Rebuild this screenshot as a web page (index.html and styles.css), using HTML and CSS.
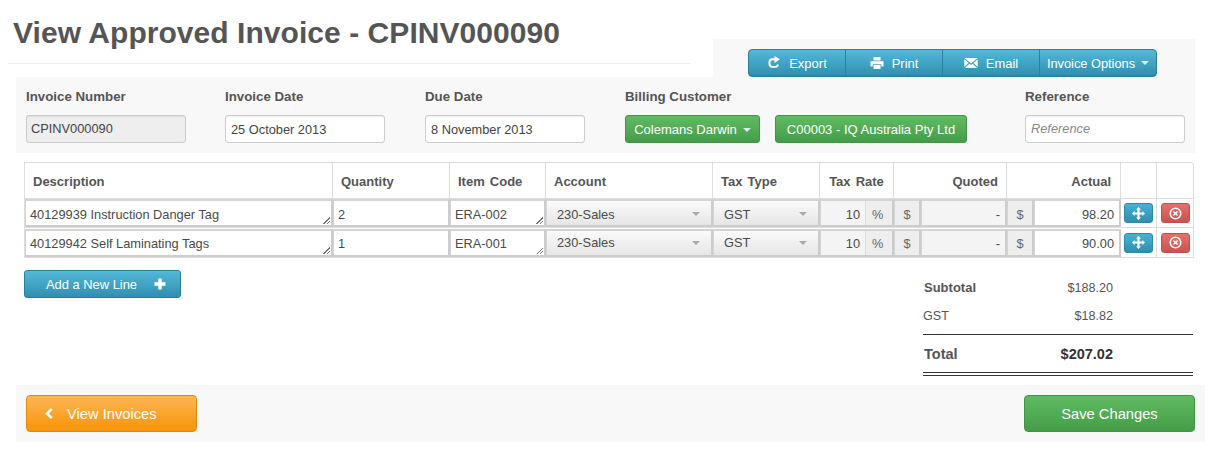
FILE: index.html
```html
<!DOCTYPE html>
<html lang="en">
<head>
<meta charset="utf-8">
<title>View Approved Invoice</title>
<link rel="stylesheet" href="styles.css">
</head>
<body>
<svg class="defs" width="0" height="0" aria-hidden="true">
  <symbol id="i-export" viewBox="0 0 14 14"><path d="M7.500 2.200H5.500A4 4 0 0 0 1.500 6.200v1.600a4 4 0 0 0 4 4h2.700a3.600 3.600 0 0 0 3.600-3.400h-2a1.800 1.800 0 0 1-1.800 1.500H5.700a2.200 2.200 0 0 1-2.200-2.200V6.400a2.200 2.200 0 0 1 2.200-2.200h1.800V7l5.500-3.800L7.500 0z" fill="currentColor"/></symbol>
  <symbol id="i-print" viewBox="0 0 14 14"><path d="M3.500 1h7v3.500h-7zM0.500 5.200h13v5.300h-2.200V8.200H2.700v2.300H0.500zM3.500 9h7v4h-7z" fill="currentColor"/></symbol>
  <symbol id="i-mail" viewBox="0 0 14 12"><path d="M0.500 1h13L7 6.600zM0.300 2.300l4.200 3.600-4.200 4.100zM13.700 2.300v7.700L9.500 5.900zM5.400 6.700 7 8l1.600-1.300 4.500 4.300H0.900z" fill="currentColor"/></symbol>
  <symbol id="i-plus" viewBox="0 0 12 12"><path d="M4.300 0.500h3.400v3.800h3.800v3.400H7.700v3.800H4.300V7.700H0.500V4.300h3.800z" fill="currentColor"/></symbol>
  <symbol id="i-left" viewBox="0 0 10 14"><path d="M7 1l2 2-4 4 4 4-2 2-6-6z" fill="currentColor"/></symbol>
  <symbol id="i-move" viewBox="0 0 14 14"><path d="M7 0l2.600 2.800H8.200v3h3V4.400L14 7l-2.800 2.600V8.200h-3v3h1.400L7 14l-2.600-2.800h1.400v-3h-3v1.400L0 7l2.800-2.600v1.400h3v-3H4.400z" fill="currentColor"/></symbol>
  <symbol id="i-remove" viewBox="0 0 14 14"><path fill-rule="evenodd" d="M7 0.500a6.500 6.500 0 1 1 0 13a6.500 6.500 0 0 1 0-13zM7 2.200a4.800 4.800 0 1 0 0 9.600a4.800 4.800 0 0 0 0-9.600zM5.300 4.200L7 5.900l1.700-1.700 1.100 1.100L8.100 7l1.700 1.700-1.100 1.100L7 8.100 5.300 9.800 4.200 8.700 5.900 7 4.200 5.300z" fill="currentColor"/></symbol>
</svg>

<header class="top">
  <div class="heading"><h1>View Approved Invoice - CPINV000090</h1></div>
  <div class="toolbar">
    <div class="btn-group">
      <a class="tool tool-export"><svg class="ico"><use href="#i-export"/></svg>Export</a>
      <a class="tool tool-print"><svg class="ico"><use href="#i-print"/></svg>Print</a>
      <a class="tool tool-email"><svg class="ico"><use href="#i-mail"/></svg>Email</a>
      <a class="tool tool-options">Invoice Options<span class="caret caret-light"></span></a>
    </div>
  </div>
</header>

<section class="details">
  <div class="field field-first">
    <label>Invoice Number</label>
    <div class="input readonly">CPINV000090</div>
  </div>
  <div class="field">
    <label>Invoice Date</label>
    <div class="input lowered">25 October 2013</div>
  </div>
  <div class="field">
    <label>Due Date</label>
    <div class="input lowered">8 November 2013</div>
  </div>
  <div class="field field-wide">
    <label>Billing Customer</label>
    <div class="customer">
      <a class="btn-green btn-branch">Colemans Darwin<span class="caret caret-light"></span></a>
      <a class="btn-green btn-code">C00003 - IQ Australia Pty Ltd</a>
    </div>
  </div>
  <div class="field">
    <label>Reference</label>
    <div class="input placeholder">Reference</div>
  </div>
</section>

<table class="lines">
  <colgroup>
    <col class="c-desc"><col class="c-qty"><col class="c-code"><col class="c-acc"><col class="c-type"><col class="c-rate"><col class="c-quoted-sign"><col class="c-quoted"><col class="c-actual-sign"><col class="c-actual"><col class="c-move"><col class="c-del">
  </colgroup>
  <thead>
    <tr>
      <th>Description</th><th>Quantity</th><th>Item Code</th><th>Account</th><th>Tax Type</th><th class="center">Tax Rate</th>
      <th class="right quoted" colspan="2">Quoted</th><th class="right" colspan="2">Actual</th><th></th><th></th>
    </tr>
  </thead>
  <tbody>
    <tr>
      <td class="cell"><div class="box grip">40129939 Instruction Danger Tag</div></td>
      <td class="cell"><div class="box">2</div></td>
      <td class="cell"><div class="box grip">ERA-002</div></td>
      <td class="cell"><div class="select acc">230-Sales<span class="caret"></span></div></td>
      <td class="cell"><div class="select">GST<span class="caret"></span></div></td>
      <td class="cell"><div class="rate"><span class="rate-val">10</span><span class="rate-unit">%</span></div></td>
      <td class="cell"><div class="addon">$</div></td>
      <td class="cell"><div class="box dis">-</div></td>
      <td class="cell"><div class="addon">$</div></td>
      <td class="cell"><div class="box num">98.20</div></td>
      <td class="act"><a class="mini mini-blue"><svg class="ico-mini"><use href="#i-move"/></svg></a></td>
      <td class="act"><a class="mini mini-red"><svg class="ico-mini"><use href="#i-remove"/></svg></a></td>
    </tr>
    <tr class="row-two">
      <td class="cell"><div class="box grip">40129942 Self Laminating Tags</div></td>
      <td class="cell"><div class="box">1</div></td>
      <td class="cell"><div class="box grip">ERA-001</div></td>
      <td class="cell"><div class="select acc">230-Sales<span class="caret"></span></div></td>
      <td class="cell"><div class="select">GST<span class="caret"></span></div></td>
      <td class="cell"><div class="rate"><span class="rate-val">10</span><span class="rate-unit">%</span></div></td>
      <td class="cell"><div class="addon">$</div></td>
      <td class="cell"><div class="box dis">-</div></td>
      <td class="cell"><div class="addon">$</div></td>
      <td class="cell"><div class="box num">90.00</div></td>
      <td class="act"><a class="mini mini-blue"><svg class="ico-mini"><use href="#i-move"/></svg></a></td>
      <td class="act"><a class="mini mini-red"><svg class="ico-mini"><use href="#i-remove"/></svg></a></td>
    </tr>
  </tbody>
</table>

<section class="under">
  <a class="btn-add">Add a New Line<svg class="ico-plus"><use href="#i-plus"/></svg></a>
  <div class="totals">
    <div class="t-row t-sub"><b>Subtotal</b><span>$188.20</span></div>
    <div class="t-row t-gst"><span>GST</span><span>$18.82</span></div>
    <div class="t-row t-total"><b>Total</b><b>$207.02</b></div>
  </div>
</section>

<footer class="actions">
  <a class="btn-orange"><svg class="ico-left"><use href="#i-left"/></svg>View Invoices</a>
  <a class="btn-save">Save Changes</a>
</footer>
</body>
</html>
```
FILE: styles.css
```css
* { box-sizing: border-box; }
html, body { margin: 0; padding: 0; background: #fff; }
body { width: 1219px; height: 456px; overflow: hidden; font-family: "Liberation Sans", Arial, sans-serif; font-size: 13px; color: #555; }
.defs { position: absolute; }
a { display: block; }

/* header */
.top { display: flex; height: 77px; }
.heading { width: 682px; height: 64px; margin-left: 8px; border-bottom: 1px solid #eee; padding: 15px 0 0 5px; }
h1 { margin: 0; font-size: 30px; line-height: 36px; font-weight: bold; color: #555; white-space: nowrap; letter-spacing: .05px; }
.toolbar { width: 482px; height: 38px; margin: 39px 0 0 23px; padding: 10px 0 0 35px; background: #f8f8f8; }
.btn-group { display: flex; width: 409px; height: 28px; border: 1px solid #2a7f9c; border-radius: 4px; background: linear-gradient(#55b8d8, #2f8fb0); overflow: hidden; box-shadow: inset 0 -1px 0 #2b86a5; }
.tool { display: flex; align-items: center; justify-content: center; color: #fff; height: 100%; font-size: 13px; border-right: 1px solid #2c80a0; }
.tool-export { width: 97px; }
.tool-print { width: 97px; }
.tool-email { width: 97px; }
.tool-options { width: 116px; border-right: 0; font-size: 12.8px; }
.ico { width: 14px; height: 14px; margin-right: 8px; }
.caret { display: inline-block; width: 0; height: 0; border-left: 4px solid transparent; border-right: 4px solid transparent; border-top: 4px solid #aaa; }
.caret-light { border-top-color: #d6eef6; margin-left: 6px; }

/* details panel */
.details { display: flex; width: 1179px; height: 76px; margin-left: 16px; padding: 12px 0 0 10px; background: #f8f8f8; }
.field { width: 200px; flex: none; }
.field-first { width: 199px; }
.field-wide { width: 400px; }
label { display: block; font-weight: bold; font-size: 13.3px; line-height: 16px; color: #555; margin-bottom: 10px; }
.input { width: 160px; height: 28px; margin-top: 1px; padding: 0 5px; line-height: 28px; font-size: 12.8px; border: 1px solid #ccc; border-radius: 3px; background: #fff; color: #444; box-shadow: inset 0 1px 1px rgba(0,0,0,.07); }
.readonly { margin-top: 0; margin-left: 0; padding-left: 4px; background: #eee; color: #444; line-height: 26px; }
.placeholder { margin-top: 0; font-style: italic; color: #888; line-height: 26px; }
.customer { display: flex; gap: 15px; }
.btn-green, .btn-save { display: flex; align-items: center; justify-content: center; color: #fff; background: linear-gradient(#5fbc62, #459c48); border: 1px solid #419345; border-radius: 3px; }
.btn-green { height: 28px; font-size: 13px; padding-top: 1px; }
.btn-branch { width: 135px; }
.btn-code { width: 192px; }

/* line table */
.lines { width: 1169px; margin: 9px 0 0 24px; table-layout: fixed; border-collapse: separate; border-spacing: 0; border: 1px solid #ddd; border-width: 1px 1px 0 1px; border-radius: 0 4px 0 0; }
.c-desc { width: 308px; } .c-qty { width: 117px; } .c-code { width: 96px; } .c-acc { width: 167px; } .c-type { width: 107px; } .c-rate { width: 74px; }
.c-quoted-sign { width: 27px; } .c-quoted { width: 86px; } .c-actual-sign { width: 27px; } .c-actual { width: 87px; } .c-move { width: 36px; } .c-del { width: 36px; }
th { height: 36px; padding: 2px 8px 0; text-align: left; font-size: 13px; font-weight: bold; color: #555; border-right: 1px solid #ddd; border-bottom: 1px solid #ddd; word-spacing: 1.5px; }
th:last-child { border-right: 0; }
th.center { text-align: center; }
th.right { text-align: right; padding-right: 9px; }
th.quoted { padding-right: 8px; }
td { padding: 0; height: 29px; border-bottom: 1px solid #ddd; font-size: 12.8px; color: #4a4a4a; }
tbody tr:last-child td { height: 30px; }
td.act { border-right: 1px solid #ddd; text-align: center; }
td.act:last-child { border-right: 0; }
.box, .select, .rate, .addon { height: 28px; line-height: 27px; border: 1px solid #ccc; border-width: 2px 2px 2px 1px; border-color: #d4d4d4 #ccc #ccc #d4d4d4; white-space: nowrap; }
.row-two .box, .row-two .rate, .row-two .addon { line-height: 25px; }
.box { position: relative; padding: 0 5px 0 4px; background: #fff; }
.grip::after { content: ""; position: absolute; right: 1px; bottom: 1px; width: 7px; height: 7px; background: linear-gradient(135deg, transparent 50%, #777 50%, #777 60%, transparent 60%, transparent 75%, #777 75%, #777 85%, transparent 85%); }
.select { display: flex; align-items: center; justify-content: space-between; padding: 2px 11px 0 10px; background: linear-gradient(#fafafa, #e6e6e6); }
.row-two .select { padding-top: 0; }
.rate { display: flex; background: #fff; }
.rate-val { width: 45px; padding-right: 5px; text-align: right; background: #f4f4f4; border-right: 1px solid #ddd; }
.rate-unit { flex: 1; padding-left: 6px; background: #eee; color: #666; }
.addon { text-align: center; background: #eee; color: #666; }
.dis { background: #f4f4f4; text-align: right; }
.num { text-align: right; }
.mini { display: flex; align-items: center; justify-content: center; width: 29px; height: 20px; margin: 0 auto; border-radius: 3px; color: #fff; }
.mini-blue { background: linear-gradient(#49b1d2, #2f8fb0); border: 1px solid #2f88a8; }
.mini-red { background: linear-gradient(#e4716d, #c9524e); border: 1px solid #c14e4a; }
.ico-mini { width: 13px; height: 13px; }

/* below table */
.under { display: flex; justify-content: space-between; align-items: flex-start; width: 1169px; height: 127px; margin-left: 24px; }
.btn-add { display: flex; align-items: center; width: 157px; height: 28px; margin-top: 12px; padding-left: 21px; color: #fff; font-size: 12.9px; background: linear-gradient(#55b8d8, #2f8fb0); border: 1px solid #2a7f9c; border-radius: 3px; }
.ico-plus { width: 12px; height: 12px; margin-left: 17px; }
.totals { width: 270px; margin-top: 21px; }
.t-row { display: flex; justify-content: space-between; padding-right: 80px; font-size: 13px; line-height: 18px; }
.t-sub { padding-left: 1px; height: 28px; }
.t-sub span { font-size: 12.6px; }
.t-gst { height: 28px; border-bottom: 1px solid #333; font-size: 12.6px; }
.t-total { height: 41px; padding: 10px 80px 0 1px; font-size: 14.5px; border-bottom: 4px double #333; }
.t-total b:last-child { color: #333; }

/* footer */
.actions { display: flex; justify-content: space-between; width: 1189px; height: 57px; margin-left: 16px; padding: 10px 10px; background: #f8f8f8; }
.btn-orange { display: flex; align-items: center; width: 171px; height: 37px; padding-left: 17px; color: #fff; font-size: 14.7px; background: linear-gradient(#fdb655, #f99406); border: 1px solid #e08a12; border-radius: 4px; }
.ico-left { width: 10px; height: 13px; margin-right: 13px; }
.btn-save { width: 171px; height: 37px; font-size: 14.7px; border-radius: 4px; }
```
